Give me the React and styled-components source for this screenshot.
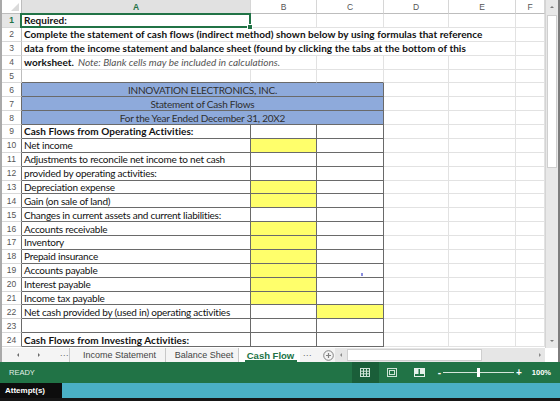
import React from "react";
import styled, { createGlobalStyle } from "styled-components";

const GlobalStyle = createGlobalStyle`
  * { box-sizing: border-box; }
  body { margin: 0; background: #fff; }
`;

const COLS = [
  { id: "A", w: 229 },
  { id: "B", w: 66 },
  { id: "C", w: 67 },
  { id: "D", w: 65 },
  { id: "E", w: 67 },
  { id: "F", w: 29 },
];

const DARK = "#6a6a6a";
const LIGHT = "#e2e2e2";
const GREEN = "#217346";
const YELLOW = "#ffff6b";
const BLUE = "#8eaadb";

const Window = styled.div`
  width: 560px;
  height: 401px;
  overflow: hidden;
  display: flex;
  flex-direction: column;
  background: #fff;
  font-family: Lato, "Liberation Sans", sans-serif;
`;

const SheetArea = styled.div`
  height: 348px;
  display: flex;
  border-left: 2px solid #a9a9a9;
`;

const Grid = styled.div`
  flex: 1;
  display: grid;
  grid-template-columns: 20px ${COLS.map((c) => `${c.w}px`).join(" ")};
  grid-template-rows: 14px;
  grid-auto-rows: 13.875px;
  align-content: start;
  overflow: hidden;
`;

const Corner = styled.div`
  position: relative;
  background: #fff;
  border-right: 1px solid #bdbdbd;
  border-bottom: 1px solid #bdbdbd;

  &::after {
    content: "";
    position: absolute;
    right: 2px;
    bottom: 2px;
    border-left: 8px solid transparent;
    border-bottom: 8px solid #dadada;
  }
`;

const ColHead = styled.div`
  display: flex;
  align-items: center;
  justify-content: center;
  font-family: "Liberation Sans", sans-serif;
  font-size: 8.5px;
  color: ${(p) => (p.$active ? GREEN : "#555")};
  font-weight: ${(p) => (p.$active ? 700 : 400)};
  background: ${(p) => (p.$active ? "#e1e1e1" : "#fff")};
  border-right: 1px solid #d6d6d6;
  border-bottom: 1px solid #bdbdbd;
`;

const RowHead = styled.div`
  display: flex;
  align-items: center;
  justify-content: center;
  font-family: "Liberation Sans", sans-serif;
  font-size: 8.5px;
  color: ${(p) => (p.$active ? GREEN : "#555")};
  font-weight: ${(p) => (p.$active ? 700 : 400)};
  background: ${(p) => (p.$active ? "#e6e6e6" : "#fff")};
  border-right: 1px solid ${(p) => (p.$table ? DARK : "#bdbdbd")};
  border-bottom: 1px solid #d8d8d8;
`;

const Cell = styled.div`
  position: relative;
  grid-column: span ${(p) => p.$span || 1};
  display: flex;
  align-items: center;
  justify-content: ${(p) => (p.$center ? "center" : "flex-start")};
  padding: 0 2px;
  font-size: 10px;
  letter-spacing: ${(p) => (p.$bold ? "0.05px" : "-0.22px")};
  color: ${(p) => (p.$center ? "#2f2f2f" : "#111")};
  font-weight: ${(p) => (p.$bold ? 700 : 400)};
  white-space: nowrap;
  background: ${(p) => p.$fill || "transparent"};
  border-right: 1px solid ${(p) => (p.$table ? DARK : LIGHT)};
  border-bottom: 1px solid ${(p) => (p.$table || p.$edge ? DARK : LIGHT)};
`;

const SelectedCell = styled(Cell)`
  &::after {
    content: "";
    position: absolute;
    inset: -1px -1px -1px -2px;
    border: 2px solid ${GREEN};
  }
  &::before {
    content: "";
    position: absolute;
    right: -3px;
    bottom: -3px;
    width: 4px;
    height: 4px;
    background: ${GREEN};
    border: 1px solid #fff;
    z-index: 1;
  }
`;

const Note = styled.span`
  font-style: italic;
  font-weight: 400;
  color: #555;
  margin-left: 4px;
  letter-spacing: 0;
`;

const Mark = styled.span`
  position: absolute;
  left: 44px;
  top: 9px;
  width: 2px;
  height: 3px;
  background: #8a8ee0;
`;

const VScroll = styled.div`
  width: 15px;
  display: flex;
  flex-direction: column;
  background: #e8e8e8;
  border-left: 1px solid #d4d4d4;
  border-right: 2px solid #7d7d7d;
`;

const ScrollBtn = styled.div`
  height: 14px;
  display: flex;
  align-items: center;
  justify-content: center;
  background: #e8e8e8;
`;

const VThumb = styled.div`
  height: 153px;
  margin: 1px 1px 0;
  background: #fff;
  border: 1px solid #cfcfcf;
`;

const Spacer = styled.div`
  flex: 1;
`;

const Tri = styled.span`
  width: 0;
  height: 0;
  border-style: solid;
  border-color: transparent;
  ${(p) =>
    p.$dir === "up"
      ? `border-width: 0 ${p.$s}px ${p.$s}px; border-bottom-color: ${p.$c};`
      : p.$dir === "down"
      ? `border-width: ${p.$s}px ${p.$s}px 0; border-top-color: ${p.$c};`
      : p.$dir === "left"
      ? `border-width: ${p.$s}px ${p.$s}px ${p.$s}px 0; border-right-color: ${p.$c};`
      : `border-width: ${p.$s}px 0 ${p.$s}px ${p.$s}px; border-left-color: ${p.$c};`}
`;

const TabBar = styled.div`
  height: 14px;
  display: flex;
  align-items: stretch;
  background: #f4f4f4;
  border-left: 2px solid #a9a9a9;
  font-family: "Liberation Sans", sans-serif;
  font-size: 9px;
  color: #444;
`;

const Nav = styled.div`
  width: 67px;
  display: flex;
  align-items: center;
  padding-left: 15px;
`;

const NavArrow = styled.div`
  width: 23px;
  display: flex;
  align-items: center;
`;

const Dots = styled.span`
  color: #666;
  font-size: 9px;
  letter-spacing: 0.5px;
  line-height: 1;
  margin-top: -3px;
`;

const Tab = styled.div`
  position: relative;
  width: ${(p) => p.$w}px;
  display: flex;
  align-items: center;
  justify-content: center;
  border-left: ${(p) => (p.$first ? "1px solid #c8c8c8" : "none")};
  border-right: 1px solid ${(p) => (p.$active ? "transparent" : "#c8c8c8")};
  background: ${(p) => (p.$active ? "#fff" : "transparent")};
  color: ${(p) => (p.$active ? GREEN : "#444")};
  font-weight: ${(p) => (p.$active ? 700 : 400)};
  font-size: ${(p) => (p.$active ? "9.5px" : "9px")};
  padding-left: ${(p) => (p.$active ? "3px" : "4px")};

  &::after {
    content: "";
    display: ${(p) => (p.$active ? "block" : "none")};
    position: absolute;
    left: 6px;
    right: 2px;
    bottom: 0;
    height: 2px;
    background: ${GREEN};
  }
`;

const TabTail = styled.div`
  display: flex;
  align-items: center;
  padding-left: 3px;
  gap: 11px;
  width: 35px;
`;

const HScroll = styled.div`
  width: 210px;
  display: flex;
  align-items: stretch;
  padding: 1px 0;
  background: #e6e6e6;
`;

const HBtn = styled.div`
  width: ${(p) => p.$w}px;
  display: flex;
  align-items: center;
  justify-content: center;
`;

const HThumb = styled.div`
  width: 135px;
  background: #fff;
  border: 1px solid #cfcfcf;
`;

const TabCorner = styled.div`
  flex: 1;
  background: #fff;
  border-right: 2px solid #7d7d7d;
`;

const StatusBar = styled.div`
  height: 21px;
  display: flex;
  align-items: stretch;
  background: ${GREEN};
  color: #fff;
  font-family: "Liberation Sans", sans-serif;
  font-size: 7.5px;
`;

const Ready = styled.div`
  display: flex;
  align-items: center;
  padding-left: 9px;
  flex: 1;
  color: #e4efe8;
`;

const ViewBtn = styled.div`
  width: 27px;
  display: flex;
  align-items: center;
  justify-content: center;
  background: ${(p) => (p.$active ? "#1a5e39" : "transparent")};
`;

const ZoomSign = styled.div`
  display: flex;
  align-items: center;
  margin-left: ${(p) => p.$ml}px;
  font-size: 10px;
  font-weight: 700;
`;

const Slider = styled.div`
  width: 71px;
  margin-left: 2px;
  display: flex;
  align-items: center;
  position: relative;

  &::before {
    content: "";
    flex: 1;
    height: 1px;
    background: #d6e6dc;
  }
`;

const SliderThumb = styled.span`
  position: absolute;
  left: 34px;
  top: 6px;
  width: 3px;
  height: 9px;
  background: #fff;
`;

const ZoomValue = styled.div`
  display: flex;
  align-items: center;
  margin-left: 10px;
  padding-right: 9px;
  font-weight: 700;
  font-size: 7.5px;
`;

const AttemptBar = styled.div`
  height: 15px;
  display: flex;
  background: #4ab0c5;
`;

const AttemptLabel = styled.div`
  width: 62px;
  display: flex;
  align-items: center;
  padding-left: 5px;
  background: #0d0d0d;
  color: #fff;
  font-family: "Liberation Sans", sans-serif;
  font-weight: 700;
  font-size: 8px;
`;

const BottomEdge = styled.div`
  height: 3px;
  background: #161616;
`;

const GridIcon = () => (
  <svg width="10" height="9" viewBox="0 0 10 9">
    <rect x="0.5" y="0.5" width="9" height="8" fill="none" stroke="#cfe3d6" />
    <path d="M3.5 0.5V8.5M6.5 0.5V8.5M0.5 3.2H9.5M0.5 5.8H9.5" stroke="#cfe3d6" strokeWidth="1" />
  </svg>
);

const LayoutIcon = () => (
  <svg width="10" height="9" viewBox="0 0 10 9">
    <rect x="0.5" y="0.5" width="9" height="8" fill="none" stroke="#cfe3d6" />
    <rect x="2.5" y="2.5" width="5" height="4" fill="none" stroke="#cfe3d6" />
  </svg>
);

const BreakIcon = () => (
  <svg width="11" height="9" viewBox="0 0 11 9">
    <rect x="0.5" y="0.5" width="10" height="8" fill="none" stroke="#e6f0ea" />
    <rect x="1" y="1" width="3.5" height="5" fill="#e6f0ea" />
    <rect x="6" y="1" width="4" height="5" fill="#e6f0ea" />
  </svg>
);

const PlusCircle = () => (
  <svg width="11" height="11" viewBox="0 0 11 11">
    <circle cx="5.5" cy="5.5" r="4.8" fill="none" stroke="#808080" />
    <path d="M5.5 3V8M3 5.5H8" stroke="#808080" strokeWidth="1.2" />
  </svg>
);

const TABLE_ROWS = [
  { n: 9, text: "Cash Flows from Operating Activities:", bold: true },
  { n: 10, text: "Net income", b: YELLOW },
  { n: 11, text: "Adjustments to reconcile net income to net cash" },
  { n: 12, text: "provided by operating activities:" },
  { n: 13, text: "Depreciation expense", b: YELLOW },
  { n: 14, text: "Gain (on sale of land)", b: YELLOW },
  { n: 15, text: "Changes in current assets and current liabilities:" },
  { n: 16, text: "Accounts receivable", b: YELLOW },
  { n: 17, text: "Inventory", b: YELLOW },
  { n: 18, text: "Prepaid insurance", b: YELLOW },
  { n: 19, text: "Accounts payable", b: YELLOW, mark: true },
  { n: 20, text: "Interest payable", b: YELLOW },
  { n: 21, text: "Income tax payable", b: YELLOW },
  { n: 22, text: "Net cash provided by (used in) operating activities", c: YELLOW },
  { n: 23, text: "" },
  { n: 24, text: "Cash Flows from Investing Activities:", bold: true },
];

const TITLES = [
  { n: 6, text: "INNOVATION ELECTRONICS, INC." },
  { n: 7, text: "Statement of Cash Flows" },
  { n: 8, text: "For the Year Ended December 31, 20X2" },
];

const Blank = ({ count }) =>
  Array.from({ length: count }, (_, i) => <Cell key={`blank-${i}`} />);

const Sheet = () => (
  <Grid>
    <Corner />
    {COLS.map((c) => (
      <ColHead key={c.id} $active={c.id === "A"}>
        {c.id}
      </ColHead>
    ))}

    <RowHead $active>1</RowHead>
    <SelectedCell $bold>Required:</SelectedCell>
    <Blank count={5} />

    <RowHead>2</RowHead>
    <Cell $span={5} $bold>
      Complete the statement of cash flows (indirect method) shown below by using formulas that reference
    </Cell>
    <Cell />

    <RowHead>3</RowHead>
    <Cell $span={5} $bold>
      data from the income statement and balance sheet (found by clicking the tabs at the bottom of this
    </Cell>
    <Cell />

    <RowHead>4</RowHead>
    <Cell $span={2} $bold>
      worksheet.<Note>Note: Blank cells may be included in calculations.</Note>
    </Cell>
    <Blank count={4} />

    <RowHead>5</RowHead>
    <Cell $edge />
    <Cell $edge />
    <Cell $edge />
    <Blank count={3} />

    {TITLES.map((t) => (
      <React.Fragment key={t.n}>
        <RowHead $table>{t.n}</RowHead>
        <Cell $span={3} $table $center $fill={BLUE}>
          {t.text}
        </Cell>
        <Blank count={3} />
      </React.Fragment>
    ))}

    {TABLE_ROWS.map((r) => (
      <React.Fragment key={r.n}>
        <RowHead $table>{r.n}</RowHead>
        <Cell $table $bold={r.bold}>
          {r.text}
        </Cell>
        <Cell $table $fill={r.b} />
        <Cell $table $fill={r.c}>
          {r.mark && <Mark />}
        </Cell>
        <Blank count={3} />
      </React.Fragment>
    ))}
  </Grid>
);

export default function App() {
  return (
    <>
      <GlobalStyle />
      <Window>
        <SheetArea>
          <Sheet />
          <VScroll>
            <ScrollBtn>
              <Tri $dir="up" $s={2.5} $c="#7a7a7a" />
            </ScrollBtn>
            <VThumb />
            <Spacer />
            <ScrollBtn>
              <Tri $dir="down" $s={2.5} $c="#7a7a7a" />
            </ScrollBtn>
          </VScroll>
        </SheetArea>

        <TabBar>
          <Nav>
            <NavArrow>
              <Tri $dir="left" $s={2.5} $c="#6b6b6b" />
            </NavArrow>
            <NavArrow>
              <Tri $dir="right" $s={2.5} $c="#6b6b6b" />
            </NavArrow>
            <Dots>...</Dots>
          </Nav>
          <Tab $w={97} $first>
            Income Statement
          </Tab>
          <Tab $w={73}>Balance Sheet</Tab>
          <Tab $w={61} $active>
            Cash Flow
          </Tab>
          <TabTail>
            <Dots>...</Dots>
            <PlusCircle />
          </TabTail>
          <HScroll>
            <HBtn $w={12}>
              <Tri $dir="left" $s={2.5} $c="#8a8a8a" />
            </HBtn>
            <HThumb />
            <Spacer />
            <HBtn $w={11}>
              <Tri $dir="right" $s={2.5} $c="#8a8a8a" />
            </HBtn>
          </HScroll>
          <TabCorner />
        </TabBar>

        <StatusBar>
          <Ready>READY</Ready>
          <ViewBtn $active>
            <GridIcon />
          </ViewBtn>
          <ViewBtn>
            <LayoutIcon />
          </ViewBtn>
          <ViewBtn>
            <BreakIcon />
          </ViewBtn>
          <ZoomSign $ml={5}>-</ZoomSign>
          <Slider>
            <SliderThumb />
          </Slider>
          <ZoomSign $ml={2}>+</ZoomSign>
          <ZoomValue>100%</ZoomValue>
        </StatusBar>

        <AttemptBar>
          <AttemptLabel>Attempt(s)</AttemptLabel>
        </AttemptBar>
        <BottomEdge />
      </Window>
    </>
  );
}
